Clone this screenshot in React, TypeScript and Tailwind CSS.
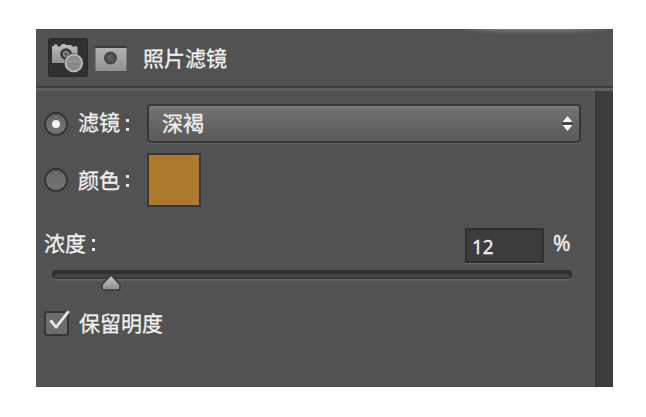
import React from "react";

const font = "font-['Liberation_Sans','Noto_Sans_CJK_SC',sans-serif]";

const CameraIcon = () => (
  <div className="w-10 h-[39px] rounded-[3px] bg-[#303030] border border-[#292929] shrink-0">
    <svg width="38" height="37" viewBox="0 0 38 37">
      <defs>
        <linearGradient id="camera" x1="0" y1="0" x2="0" y2="1">
          <stop offset="0" stopColor="#bdbdbd" />
          <stop offset="1" stopColor="#929292" />
        </linearGradient>
      </defs>
      <path d="M3 24V7h2V5.5h3.5V7.500H11l2-2.5h3l1 1h5l1.500 1.500H28.500V24z" fill="url(#camera)" />
      <circle cx="17" cy="15" r="5.8" fill="#383838" />
      <circle cx="17" cy="15" r="3.3" fill="#858585" />
      <circle cx="17" cy="15" r="1.5" fill="#555555" />
      <circle cx="24.8" cy="24" r="9.8" fill="#444444" />
      <circle cx="24.8" cy="24" r="8.3" fill="#8c8c8c" stroke="#b9b9b9" strokeWidth="1.8" />
      <path d="M18.5 22.5h12.5" stroke="#969696" strokeWidth="1.5" />
      <path d="M19 25h11.5" stroke="#808080" strokeWidth="1" />
    </svg>
  </div>
);

const MaskIcon = () => (
  <svg width="32" height="26" viewBox="0 0 32 26" className="shrink-0">
    <defs>
      <linearGradient id="mask" x1="0" y1="0" x2="0" y2="1">
        <stop offset="0" stopColor="#b2b2b2" />
        <stop offset="1" stopColor="#929292" />
      </linearGradient>
    </defs>
    <path d="M0 0h32v2H0z" fill="#3b3b3b" />
    <path d="M0.5 2h31v23h-31z" fill="url(#mask)" />
    <circle cx="15.5" cy="12" r="6.5" fill="#484848" />
    <circle cx="15.5" cy="12" r="3.5" fill="#5c5c5c" />
  </svg>
);

const Radio = ({ checked = false }: { checked?: boolean }) => (
  <span className="w-6 h-6 rounded-full border-2 border-[#363636] bg-linear-to-b from-[#666666] to-[#777777] flex items-center justify-center shrink-0">
    {checked && <span className="w-2 h-2 rounded-full bg-[#f4f4f4]" />}
  </span>
);

const Label = ({ children }: { children: React.ReactNode }) => (
  <span className="text-[21px] leading-6 whitespace-nowrap [-webkit-text-stroke:0.3px_#f0f0f0]">{children}</span>
);

const Colon = () => (
  <span className="flex flex-col gap-[6px] w-[3px] shrink-0">
    <span className="w-[3px] h-[3px] bg-[#e8e8e8]" />
    <span className="w-[3px] h-[3px] bg-[#e8e8e8]" />
  </span>
);

const Header = () => (
  <header className="h-[62px] flex flex-col border-b-3 border-[#5f5f5f]">
    {/* soft highlight along the right part of the top edge */}
    <div className="h-[5px] ml-[425px] mr-1 bg-linear-to-b from-[#7c7c7c] to-[#525252] mask-x-from-75%" />
    <div className="h-[52px] pl-3 pb-[1px] flex items-center">
      <div className="-mt-1">
        <CameraIcon />
      </div>
      <span className="ml-[7px] -mt-[2px]">
        <MaskIcon />
      </span>
      <span className="ml-4 mt-px">
        <Label>照片滤镜</Label>
      </span>
    </div>
    <div className="h-[2px] bg-[#3d3d3d]" />
  </header>
);

const FilterSelect = () => (
  <div className="w-[434px] h-[39px] ml-[18px] pl-[13px] pr-[6px] rounded-[4px] border-2 border-[#363636] bg-linear-to-b from-[#737373] to-[#595959] shadow-[inset_0_1px_0_#828282,0_1px_0_#626262] flex items-center justify-between">
    <Label>深褐</Label>
    <svg width="11" height="17" viewBox="0 0 11 17">
      <path d="M0 8.5h11" stroke="#3a3a3a" strokeWidth="2" />
      <path d="M5.5 1l5 6H.5zM5.5 16l5-6H.5z" fill="#f4f4f4" />
    </svg>
  </div>
);

const Slider = () => (
  <svg width="522" height="24" viewBox="0 0 522 24" className="ml-[15px] block">
    <defs>
      <linearGradient id="thumb" x1="0" y1="0" x2="0" y2="1">
        <stop offset="0" stopColor="#c8c8c8" />
        <stop offset="1" stopColor="#8c8c8c" />
      </linearGradient>
    </defs>
    <rect x="1" y="2" width="520" height="8.5" rx="4" fill="#686868" />
    <rect x="1" y="0" width="520" height="9" rx="4" fill="#303030" />
    <rect x="3" y="4" width="516" height="4" rx="2" fill="#424242" />
    <path
      d="M60 5l7.5 8q1.5 1.5 1.5 3v2q0 2-2 2H53q-2 0-2-2v-2q0-1.5 1.5-3z"
      fill="url(#thumb)"
      stroke="#393939"
      strokeWidth="1.5"
    />
  </svg>
);

const Checkbox = () => (
  <svg width="28" height="28" viewBox="0 0 28 28" className="shrink-0">
    <rect x="1" y="3" width="23" height="23" rx="2" fill="#6d6d6d" stroke="#353535" strokeWidth="2" />
    <path d="M4.5 12l3.5-2 4 5.5L23 1.5l3.5 1L13 20h-1.5z" fill="#e6e6e6" stroke="#444444" strokeWidth="0.6" />
  </svg>
);

const Settings = () => (
  <main className="w-[559px] h-[296px] pt-[13px] border-r border-[#5b5b5b]">
    <div className="h-[39px] pl-2 flex items-center">
      <Radio checked />
      <span className="ml-[10px]">
        <Label>滤镜</Label>
      </span>
      <span className="ml-[6px] mt-[2px]">
        <Colon />
      </span>
      <FilterSelect />
    </div>
    <div className="h-[54px] mt-[10px] pl-2 flex items-center">
      <Radio />
      <span className="ml-[10px] mt-[3px]">
        <Label>颜色</Label>
      </span>
      <span className="ml-[6px] mt-[2px]">
        <Colon />
      </span>
      <div className="w-[54px] h-[54px] ml-[18px] border-2 border-[#383838] bg-[#ae7a30]" />
    </div>
    <div className="h-9 mt-5 pl-2 flex items-center">
      <span className="-mt-px">
        <Label>浓度</Label>
      </span>
      <span className="ml-[6px]">
        <Colon />
      </span>
      <div className="w-[79px] h-[35px] ml-[370px] pl-[5px] border-2 border-[#303030] bg-[#3c3c3c] font-['Noto_Sans',sans-serif] text-[19px] leading-[34px] [-webkit-text-stroke:0.3px_#f0f0f0] shadow-[0_1px_0_#646464]">
        12
      </div>
      <span className="ml-[9px] -mt-[5px] font-['Noto_Sans',sans-serif] text-[21px] leading-7 [-webkit-text-stroke:0.4px_#f0f0f0]">
        %
      </span>
    </div>
    <div className="mt-[7px]">
      <Slider />
    </div>
    <div className="h-7 mt-[15px] pl-2 flex items-center">
      <Checkbox />
      <span className="ml-[7px] mt-[4px]">
        <Label>保留明度</Label>
      </span>
    </div>
  </main>
);

const App = () => (
  <div className="w-[646px] h-[417px] bg-white pt-[29px] pl-9">
    <section className={`w-[577px] h-[358px] bg-[#525252] text-[#f0f0f0] ${font}`}>
      <Header />
      <div className="flex">
        <Settings />
        <aside className="w-[18px] h-[296px] bg-[#3c3c3c] border-l-2 border-[#353535]" />
      </div>
    </section>
  </div>
);

export default App;
